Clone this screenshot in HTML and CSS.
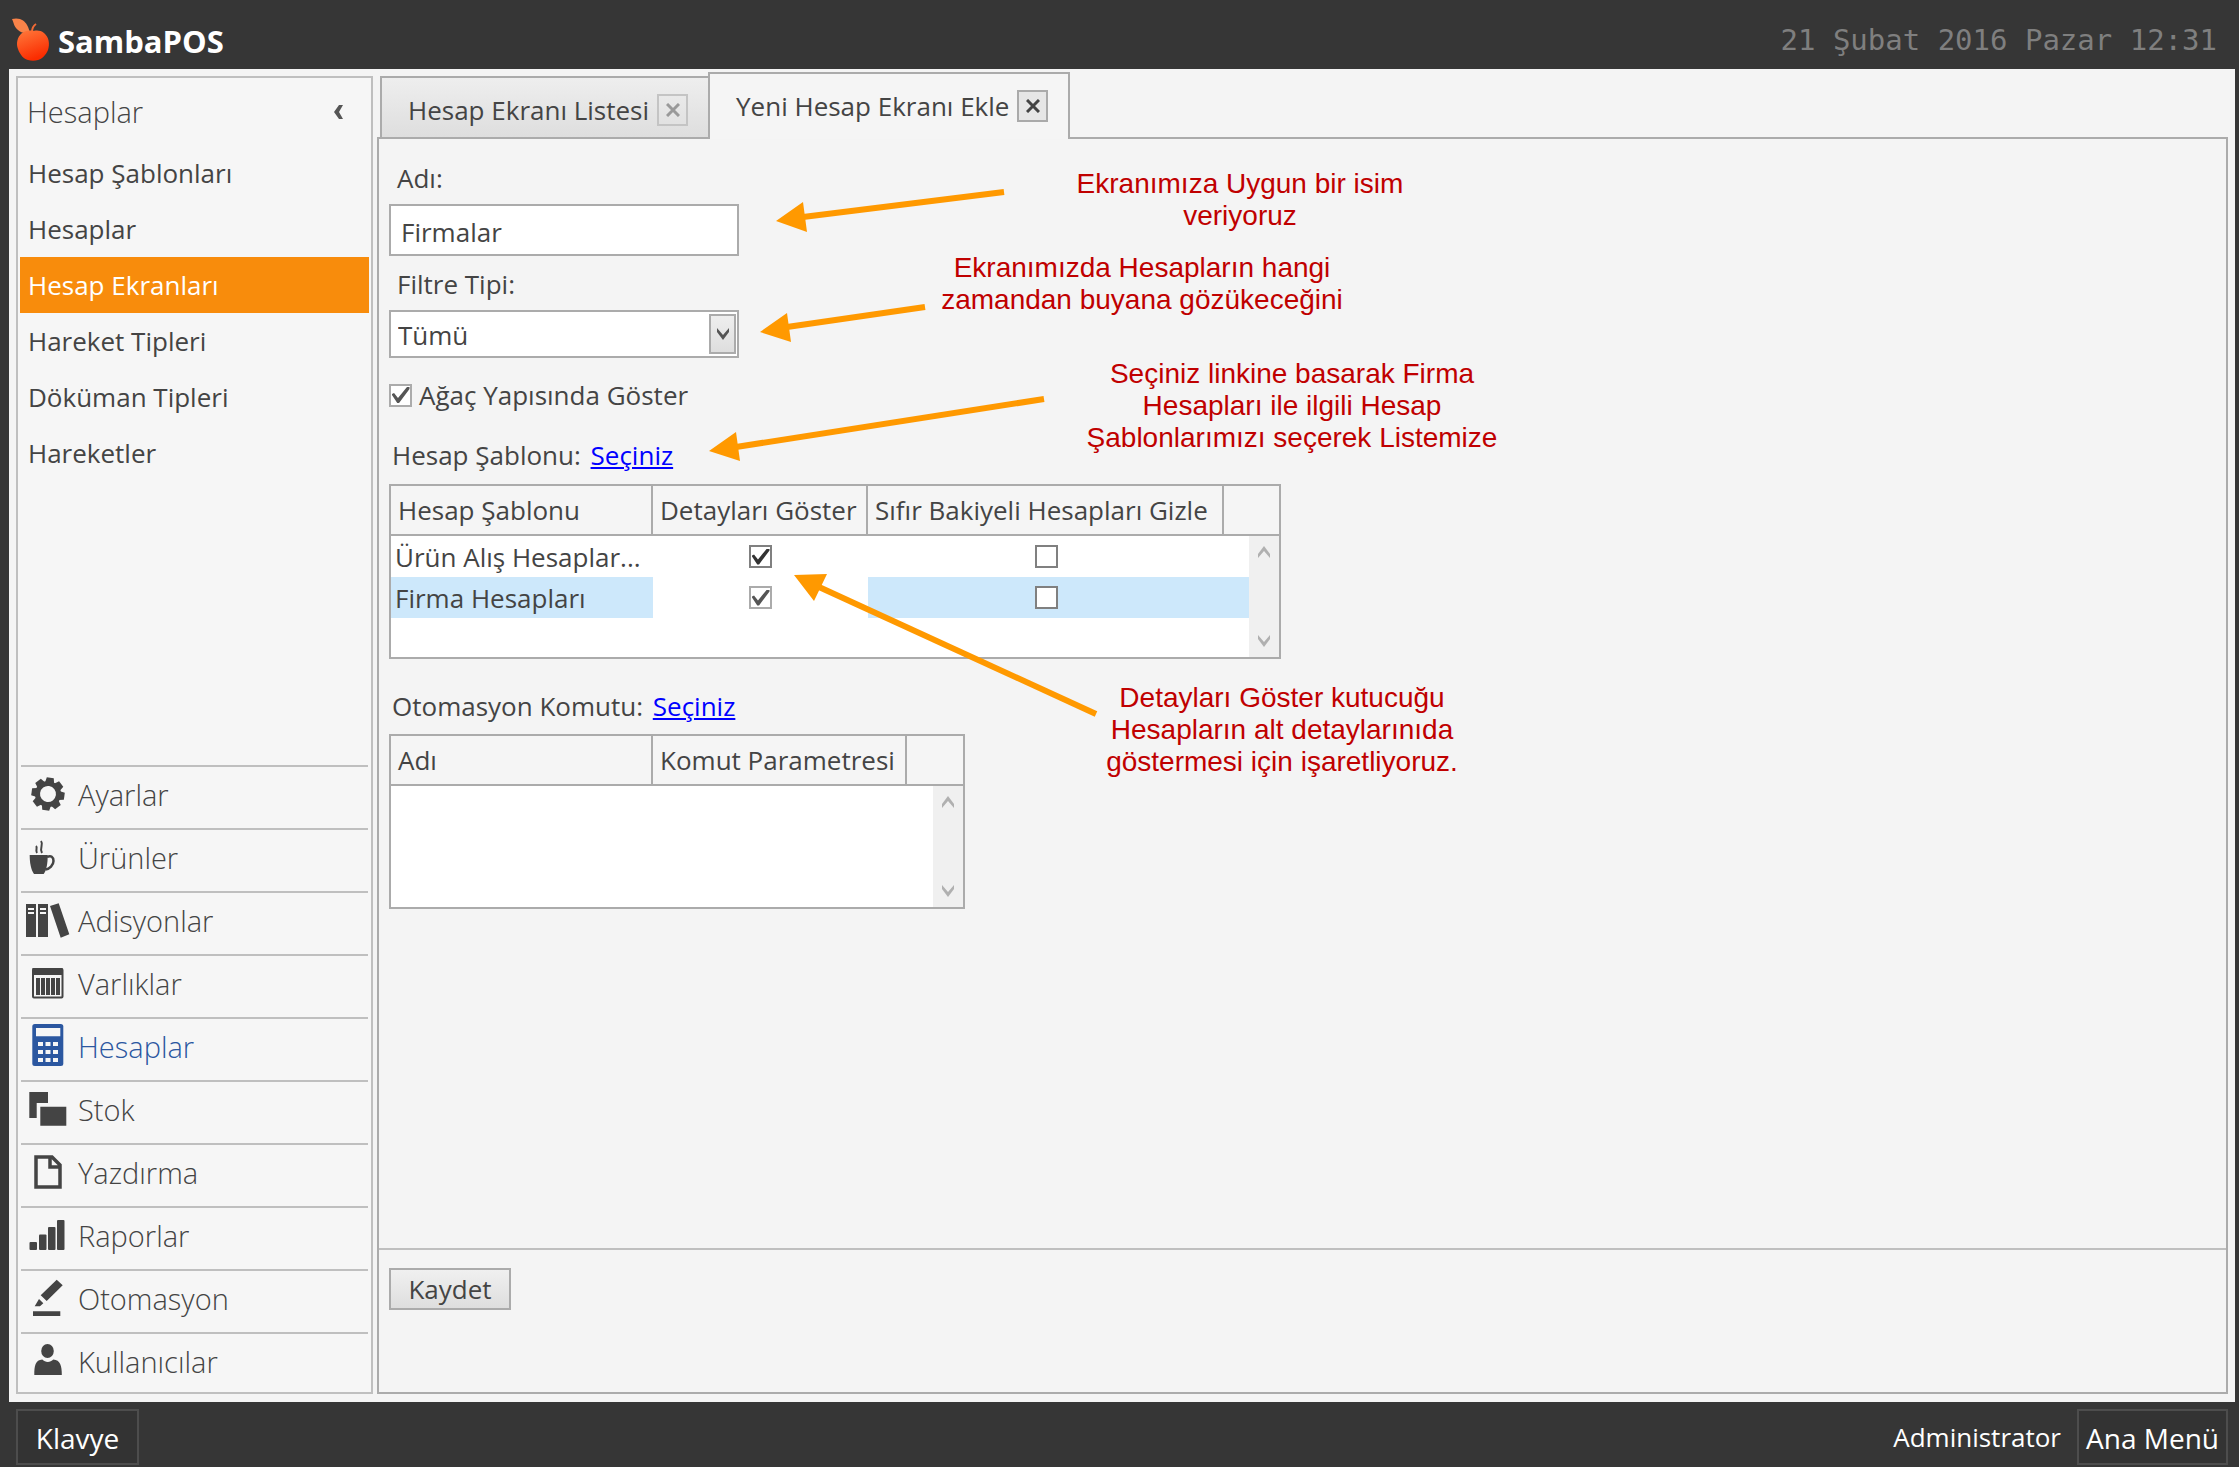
FILE: index.html
```html
<!DOCTYPE html>
<html lang="tr">
<head>
<meta charset="utf-8">
<title>SambaPOS</title>
<link rel="stylesheet" href="styles.css">
</head>
<body>
<header class="topbar">
  <div class="brand">
    <svg class="brand-mark" viewBox="0 0 38 44" aria-hidden="true">
      <defs>
        <linearGradient id="apple" x1="0" y1="0" x2="0.4" y2="1"><stop offset="0" stop-color="#ff7a3c"/><stop offset="1" stop-color="#fb2c00"/></linearGradient>
      </defs>
      <path fill="#f98349" d="M0 1C8-1 13 3 15 7c2 3 2 6 3 7-4 2-9 1-12-2C2 9 2 5 0 1z"/>
      <path fill="none" stroke="#f26a35" stroke-width="2" d="M20 14c0-3 1-6 4-8"/>
      <path fill="url(#apple)" d="M20 14c3-2 8-2 12 1 5 4 6 11 4 17-2 5-6 9-10 10-3 1-7 1-10 0-4-1-8-5-10-11-2-5-1-12 4-16 5-3 10-3 14-1z"/>
    </svg>
    <span class="brand-name">SambaPOS</span>
  </div>
  <time class="clock">21 Şubat 2016 Pazar 12:31</time>
</header>

<div class="workspace">
  <aside class="sidebar">
    <div class="side-head">
      <h1>Hesaplar</h1>
      <button class="collapse" aria-label="Daralt"><svg viewBox="0 0 12 14" width="12" height="14"><path d="M10 0H6L1 7l5 7h4L6 7z" fill="#555"/></svg></button>
    </div>
    <nav class="side-menu">
      <a href="#">Hesap Şablonları</a>
      <a href="#">Hesaplar</a>
      <a href="#" class="selected">Hesap Ekranları</a>
      <a href="#">Hareket Tipleri</a>
      <a href="#">Döküman Tipleri</a>
      <a href="#">Hareketler</a>
    </nav>
    <nav class="modules">
      <a href="#"><svg viewBox="0 0 48 44"><g transform="translate(24 20) rotate(8)"><circle r="10.500" fill="none" stroke="currentColor" stroke-width="5"/><g fill="currentColor"><path id="t" d="M-3.500-16.500h7l1 5h-9z"/><use href="#t" transform="rotate(45)"/><use href="#t" transform="rotate(90)"/><use href="#t" transform="rotate(135)"/><use href="#t" transform="rotate(180)"/><use href="#t" transform="rotate(225)"/><use href="#t" transform="rotate(270)"/><use href="#t" transform="rotate(315)"/></g></g></svg>Ayarlar</a>
      <a href="#"><svg viewBox="0 0 48 44"><path fill="currentColor" d="M5.700 18h18c0 8-1 15-4 19H10c-3-4-4.300-11-4.300-19z"/><g fill="none" stroke="currentColor"><path stroke-width="2.500" d="M23 20c4-2 6.500 0 6.500 4s-4 8-8 8.500"/><path stroke-width="2" d="M17 4c3 4-2 6 1 12M12 9c2 2-1 4 1 7"/></g></svg>Ürünler</a>
      <a href="#"><svg viewBox="0 0 48 44"><path fill="currentColor" fill-rule="evenodd" d="M2 4h10v33H2zM4 8v2h6V8zM4 12v2h6v-2zM14 4h10v33H14zM16 8v2h6V8zM16 12v2h6v-2zM26 6l8.700-2.700 10.600 31-8.600 3.400z"/></svg>Adisyonlar</a>
      <a href="#"><svg viewBox="0 0 48 44"><rect x="9" y="6" width="29.500" height="28.500" rx="1" fill="none" stroke="currentColor" stroke-width="2"/><path fill="currentColor" d="M8.500 5h30v7h-30zM12 15h4v17h-4zM17 15h4v17h-4zM22 15h4v17h-4zM27 15h4v17h-4zM32 15h4v17h-4z"/></svg>Varlıklar</a>
      <a href="#" class="current"><svg viewBox="0 0 48 44"><rect x="8.300" y="-2" width="31" height="42" rx="2.500" fill="currentColor"/><path fill="#f6f6f6" d="M12 2h24.300v8.300H12zM14 16h5v4h-5zM21.500 16h5v4h-5zM29 16h5v4h-5zM14 24h5v4h-5zM21.500 24h5v4h-5zM29 24h5v4h-5zM14 32h5v4h-5zM21.500 32h5v4h-5zM29 32h5v4h-5z"/></svg>Hesaplar</a>
      <a href="#"><svg viewBox="0 0 48 44"><path fill="currentColor" d="M5.300 3H24v11H12.700v15H5.300zM16.300 17.700h26v19h-26z"/></svg>Stok</a>
      <a href="#"><svg viewBox="0 0 48 44"><path fill="none" stroke="currentColor" stroke-width="3.500" d="M12 5h16l8 8v22H12zM26 5v10h10"/></svg>Yazdırma</a>
      <a href="#"><svg viewBox="0 0 48 44"><g fill="currentColor"><rect x="5.500" y="27" width="7.500" height="8" rx="1"/><rect x="15" y="19.500" width="7.500" height="15.500" rx="1"/><rect x="24" y="12" width="7.500" height="23" rx="1"/><rect x="33" y="5" width="7.500" height="30" rx="1"/></g></svg>Raporlar</a>
      <a href="#"><svg viewBox="0 0 48 44"><path fill="currentColor" d="M9 33.300h27.300V38H9zM32.700 1.700l6 5.600L22.700 23l-6-5.700zM15 21l4.300 4.300-3.300 3h-5.300z"/></svg>Otomasyon</a>
      <a href="#"><svg viewBox="0 0 48 44"><ellipse cx="23.500" cy="10" rx="6.300" ry="7" fill="currentColor"/><path fill="currentColor" d="M10.300 34c0-9 1-15 8-15.500 3 3.300 8 3.300 11 0 7 .5 8.500 6.500 8.500 15.500z"/></svg>Kullanıcılar</a>
    </nav>
  </aside>

  <main class="main">
    <div class="tabs">
      <div class="tab"><button class="tab-name">Hesap Ekranı Listesi</button><button class="tab-close" aria-label="Kapat"><svg viewBox="0 0 14 14" width="14" height="14"><path d="M1 1l12 12M13 1L1 13" stroke="currentColor" stroke-width="3"/></svg></button></div>
      <div class="tab active"><button class="tab-name">Yeni Hesap Ekranı Ekle</button><button class="tab-close" aria-label="Kapat"><svg viewBox="0 0 14 14" width="14" height="14"><path d="M1 1l12 12M13 1L1 13" stroke="currentColor" stroke-width="3"/></svg></button></div>
    </div>

    <form class="panel">
      <div class="fields">
        <label class="caption" for="name">Adı:</label>
        <input class="text-box" id="name" type="text" value="Firmalar">
        <label class="caption second" for="filter">Filtre Tipi:</label>
        <div class="combo">
          <select id="filter"><option>Tümü</option></select>
          <span class="combo-button"><svg viewBox="0 0 14 12" width="14" height="12"><path d="M1 0v4l6 8 6-8V0L7 7z" fill="#555"/></svg></span>
        </div>
        <label class="check-line"><input class="check" type="checkbox" checked>Ağaç Yapısında Göster</label>

        <p class="picker">Hesap Şablonu: <a href="#">Seçiniz</a></p>
        <div class="grid grid-wide">
          <table>
            <colgroup><col class="col-name"><col class="col-detail"><col class="col-zero"><col></colgroup>
            <thead><tr><th>Hesap Şablonu</th><th>Detayları Göster</th><th>Sıfır Bakiyeli Hesapları Gizle</th><th></th></tr></thead>
            <tbody>
              <tr><td>Ürün Alış Hesaplar...</td><td class="mid"><input class="check strong" type="checkbox" checked aria-label="Detayları Göster"></td><td class="mid"><input class="check strong" type="checkbox" aria-label="Sıfır Bakiyeli Hesapları Gizle"></td><td></td></tr>
              <tr class="picked"><td>Firma Hesapları</td><td class="mid editing"><input class="check" type="checkbox" checked aria-label="Detayları Göster"></td><td class="mid"><input class="check strong" type="checkbox" aria-label="Sıfır Bakiyeli Hesapları Gizle"></td><td></td></tr>
            </tbody>
          </table>
          <div class="scroll"><svg viewBox="0 0 14 12" width="14" height="12"><path d="M1 12V8l6-8 6 8v4L7 5z" fill="#b0b0b0"/></svg><svg viewBox="0 0 14 12" width="14" height="12"><path d="M1 0v4l6 8 6-8V0L7 7z" fill="#b0b0b0"/></svg></div>
        </div>

        <p class="picker lower">Otomasyon Komutu: <a href="#">Seçiniz</a></p>
        <div class="grid grid-narrow">
          <table>
            <colgroup><col class="col-name"><col class="col-param"><col></colgroup>
            <thead><tr><th>Adı</th><th>Komut Parametresi</th><th></th></tr></thead>
            <tbody></tbody>
          </table>
          <div class="scroll"><svg viewBox="0 0 14 12" width="14" height="12"><path d="M1 12V8l6-8 6 8v4L7 5z" fill="#b0b0b0"/></svg><svg viewBox="0 0 14 12" width="14" height="12"><path d="M1 0v4l6 8 6-8V0L7 7z" fill="#b0b0b0"/></svg></div>
        </div>
      </div>

      <div class="actions"><button class="save" type="button">Kaydet</button></div>

      <!-- Arrows and notes laid over the form -->
      <svg class="arrows" viewBox="0 0 800 640" width="800" height="640" aria-hidden="true">
        <g stroke="#ff9900" stroke-width="6">
          <path d="M625 53L424 78"/><path d="M546 168L408 188"/><path d="M665 260L357 308"/><path d="M717 575L440 448"/>
        </g>
        <path fill="#ff9900" d="M397 82l27-19 4 30zM381 193l27-19 4 29zM330 312l27-19 4 29zM415 436l33-1-13 27z"/>
      </svg>
      <p class="note note-name">Ekranımıza Uygun bir isim<br>veriyoruz</p>
      <p class="note note-filter">Ekranımızda Hesapların hangi<br>zamandan buyana gözükeceğini</p>
      <p class="note note-pick">Seçiniz linkine basarak Firma<br>Hesapları ile ilgili Hesap<br>Şablonlarımızı seçerek Listemize</p>
      <p class="note note-detail">Detayları Göster kutucuğu<br>Hesapların alt detaylarınıda<br>göstermesi için işaretliyoruz.</p>
    </form>
  </main>
</div>

<footer class="bottombar">
  <button class="bar-button keyboard">Klavye</button>
  <span class="user">Administrator</span>
  <button class="bar-button">Ana Menü</button>
</footer>
</body>
</html>
```

FILE: styles.css
```css
* { box-sizing: border-box; }

body {
  margin: 0;
  min-height: 100vh;
  display: flex;
  flex-direction: column;
  background: #363636;
  color: #444;
  font: 26px/36px "Open Sans", "Noto Sans", sans-serif;
}

button, input, select { font: inherit; color: inherit; }
button { padding: 0; border: 0; background: none; white-space: nowrap; }
p, h1 { margin: 0; }

/* Top bar */
.topbar {
  height: 69px;
  padding: 10px 22px 0 12px;
  display: flex;
  align-items: center;
  justify-content: space-between;
}
.brand { display: flex; align-items: center; gap: 8px; color: #fff; }
.brand-mark { width: 38px; height: 44px; }
.brand-name { padding-top: 2px; font-size: 31px; font-weight: 700; }
.clock { font: 29px/36px "DejaVu Sans Mono", monospace; color: #7f7f7f; }

/* Work area */
.workspace {
  flex: 1;
  margin: 0 4px 0 9px;
  padding: 0 7px 8px;
  display: flex;
  gap: 4px;
  background: #f4f4f4;
}

.sidebar {
  width: 357px;
  margin-top: 7px;
  display: flex;
  flex-direction: column;
  border: 2px solid #bfbfbf;
  background: #f6f6f6;
}
.side-head {
  height: 67px;
  padding: 0 26px 0 9px;
  display: flex;
  align-items: center;
  justify-content: space-between;
}
.side-head h1 { font-size: 29px; font-weight: 300; }
.collapse { display: flex; }
.side-menu { padding: 0 2px; }
.side-menu a {
  display: flex;
  align-items: center;
  height: 56px;
  padding-left: 8px;
  color: #444;
  text-decoration: none;
}
.side-menu .selected { background: #f88c0c; color: #fff; }

.modules { margin-top: auto; padding: 0 3px; }
.modules a {
  display: flex;
  align-items: center;
  gap: 6px;
  height: 63px;
  padding: 0 0 6px 3px;
  border-top: 2px solid #bfbfbf;
  color: #444;
  font-size: 29px;
  font-weight: 300;
  text-decoration: none;
}
.modules svg { width: 48px; height: 44px; margin-top: 3px; overflow: visible; }
.modules .current { color: #2b57a0; }
.modules a:last-child { height: 60px; padding-bottom: 3px; }

/* Tabs */
.main { flex: 1; display: flex; flex-direction: column; padding-top: 3px; }
.tabs {
  display: flex;
  align-items: flex-end;
  margin: 0 0 -2px 3px;
  z-index: 1;
}
.tab {
  display: flex;
  align-items: center;
  gap: 8px;
  height: 61px;
  margin-bottom: 2px;
  padding: 4px 20px 0 26px;
  border: 2px solid #ababab;
  border-width: 2px 0 0 2px;
  background: linear-gradient(#eee, #dedede);
}
.tab.active {
  height: 67px;
  margin-bottom: 0;
  padding: 0 20px 2px 26px;
  border-width: 2px 2px 0;
  background: #f5f5f5;
}
.tab-close {
  width: 31px;
  height: 32px;
  display: grid;
  place-items: center;
  border: 2px solid #c4c4c4;
  color: #999;
}
.active .tab-close { border-color: #aaa; background: #e6e6e6; color: #444; }

/* Form panel */
.panel {
  position: relative;
  flex: 1;
  display: flex;
  flex-direction: column;
  border: 2px solid #ababab;
}
.fields {
  flex: 1;
  display: flex;
  flex-direction: column;
  align-items: flex-start;
  padding: 21px 10px 0;
}
.caption { margin-bottom: 8px; padding-left: 8px; }
.caption.second { margin-top: 10px; }
.text-box {
  width: 350px;
  height: 52px;
  padding: 3px 10px 0;
  border: 2px solid #ababab;
  background: #fff;
}
.combo { display: grid; width: 350px; height: 48px; }
.combo select {
  grid-area: 1 / 1;
  appearance: none;
  padding: 2px 7px 0;
  border: 2px solid #ababab;
  border-radius: 0;
  background: #fff;
}
.combo-button {
  grid-area: 1 / 1;
  justify-self: end;
  width: 27px;
  margin: 4px 3px;
  display: grid;
  place-items: center;
  border: 2px solid #ababab;
  background: linear-gradient(#eee, #dedede);
  pointer-events: none;
}
.check-line { display: flex; align-items: center; gap: 7px; margin-top: 19px; }
.check {
  appearance: none;
  width: 23px;
  height: 23px;
  margin: 0;
  display: grid;
  place-items: center;
  border: 2px solid #ababab;
  background: #fff;
  color: #555;
}
.check.strong { border-color: #808080; color: #333; }
.check:checked::before {
  content: "";
  width: 18px;
  height: 16px;
  background: currentColor;
  clip-path: polygon(0 45%, 14% 38%, 36% 68%, 86% 0, 100% 0, 100% 12%, 42% 100%, 32% 100%);
}
.picker { margin: 24px 0 11px; padding-left: 3px; }
.picker.lower { margin: 29px 0 10px; }
.picker a { margin-left: 3px; color: #00f; }

/* Data grids */
.grid {
  display: grid;
  height: 175px;
  border: 2px solid #ababab;
  background: #fff;
}
.grid-wide { width: 892px; }
.grid-narrow { width: 576px; }
.grid table {
  grid-area: 1 / 1;
  align-self: start;
  width: 100%;
  table-layout: fixed;
  border-collapse: separate;
  border-spacing: 0;
}
.col-name { width: 262px; }
.col-detail { width: 215px; }
.col-zero { width: 356px; }
.col-param { width: 254px; }
.grid th {
  height: 50px;
  padding: 0 0 0 7px;
  border: 2px solid #ababab;
  border-width: 0 2px 2px 0;
  background: #f5f5f5;
  font-weight: 400;
  text-align: left;
  white-space: nowrap;
}
.grid th:last-child { border-right: 0; }
.grid td { height: 41px; padding: 1px 0 0 4px; white-space: nowrap; }
.grid td.mid { padding: 0; }
.mid .check { margin: 0 auto; }
.picked td { background: #cde8fb; }
.picked .editing { background: #fff; }
.scroll {
  grid-area: 1 / 1;
  justify-self: end;
  width: 30px;
  margin-top: 50px;
  padding: 10px 0;
  display: flex;
  flex-direction: column;
  align-items: center;
  justify-content: space-between;
  background: #f0f0f0;
}

.actions { height: 144px; padding: 18px 10px; border-top: 2px solid #bfbfbf; }
.save {
  height: 42px;
  width: 122px;
  border: 2px solid #ababab;
  background: linear-gradient(#f0f0f0, #dedede);
}

/* Overlay notes */
.arrows { position: absolute; left: 0; top: 0; pointer-events: none; }
.note {
  position: absolute;
  width: 420px;
  color: #c00000;
  font: 28px/32px "Liberation Sans", Arial, sans-serif;
  text-align: center;
}
.note-name { left: 651px; top: 29px; }
.note-filter { left: 553px; top: 113px; }
.note-pick { left: 703px; top: 219px; }
.note-detail { left: 693px; top: 543px; }

/* Bottom bar */
.bottombar {
  height: 65px;
  padding: 7px 11px 2px 16px;
  display: flex;
  align-items: stretch;
  color: #fff;
}
.bar-button {
  width: 151px;
  padding-top: 2px;
  border: 2px solid #4d4d4d;
  background: #333;
  font-size: 28px;
}
.keyboard { width: 123px; margin-right: auto; }
.user { align-self: center; margin-right: 16px; }
```
